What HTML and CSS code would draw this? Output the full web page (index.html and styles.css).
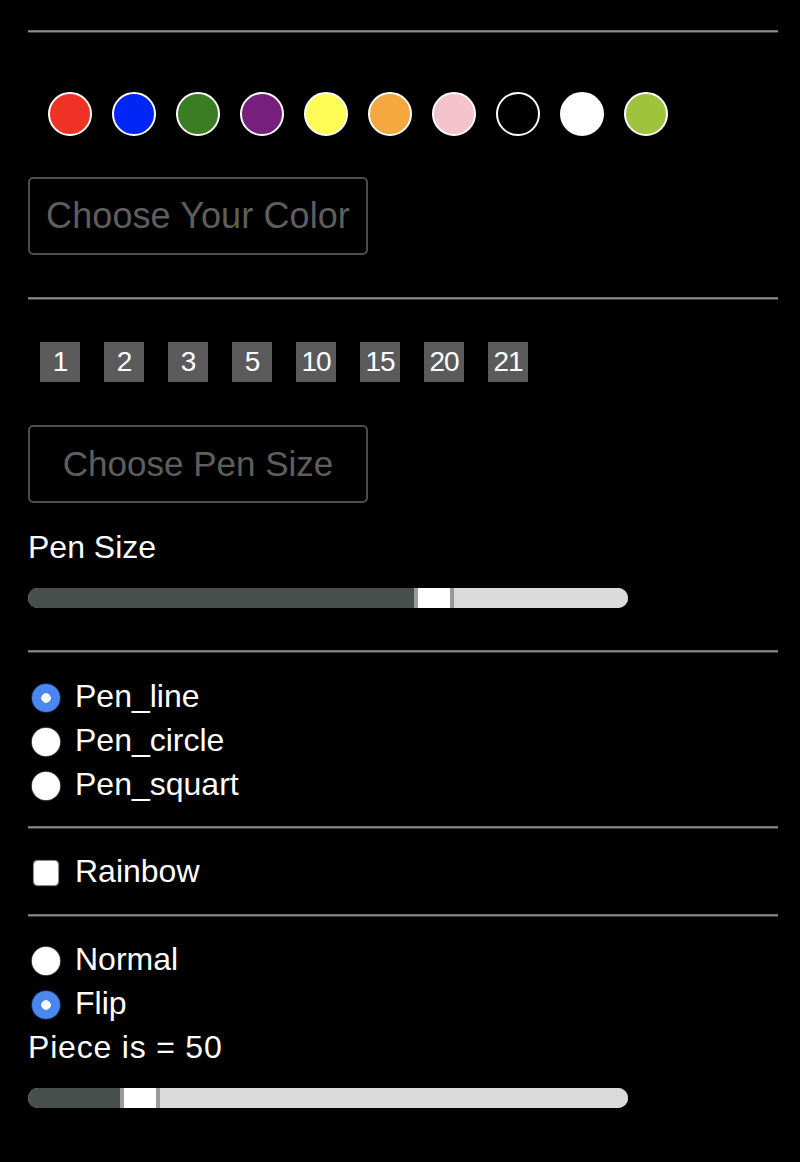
FILE: index.html
```html
<!DOCTYPE html>
<html lang="en">
<head>
<meta charset="utf-8">
<title>Pen Settings</title>
<link rel="stylesheet" href="styles.css">
</head>
<body>
<div class="panel">
  <hr class="rule">
  <div class="palette">
    <span class="swatch red"></span>
    <span class="swatch blue"></span>
    <span class="swatch green"></span>
    <span class="swatch purple"></span>
    <span class="swatch yellow"></span>
    <span class="swatch orange"></span>
    <span class="swatch pink"></span>
    <span class="swatch black"></span>
    <span class="swatch white"></span>
    <span class="swatch lime"></span>
  </div>
  <button class="choose choose-color">Choose Your Color</button>
  <hr class="rule rule-2">
  <div class="sizes">
    <span class="size">1</span>
    <span class="size">2</span>
    <span class="size">3</span>
    <span class="size">5</span>
    <span class="size">10</span>
    <span class="size">15</span>
    <span class="size">20</span>
    <span class="size">21</span>
  </div>
  <button class="choose choose-size">Choose Pen Size</button>
  <div class="label pen-label">Pen Size</div>
  <div class="slider slider-pen">
    <div class="fill" style="width:386px"></div>
    <div class="thumb"></div>
    <div class="rest"></div>
  </div>
  <hr class="rule rule-3">
  <div class="options options-pen">
    <label class="opt"><input type="radio" name="pen" checked><span>Pen_line</span></label>
    <label class="opt"><input type="radio" name="pen"><span>Pen_circle</span></label>
    <label class="opt"><input type="radio" name="pen"><span>Pen_squart</span></label>
  </div>
  <hr class="rule rule-4">
  <div class="options options-rainbow">
    <label class="opt"><input type="checkbox" class="check"><span>Rainbow</span></label>
  </div>
  <hr class="rule rule-5">
  <div class="options options-mode">
    <label class="opt"><input type="radio" name="mode"><span>Normal</span></label>
    <label class="opt"><input type="radio" name="mode" checked><span>Flip</span></label>
  </div>
  <div class="label piece-label">Piece is = 50</div>
  <div class="slider slider-piece">
    <div class="fill" style="width:92px"></div>
    <div class="thumb"></div>
    <div class="rest"></div>
  </div>
</div>
</body>
</html>
```
FILE: styles.css
```css
html, body {
  margin: 0;
  padding: 0;
  background: #000;
}

body {
  font-family: "Liberation Sans", Arial, sans-serif;
  color: #fff;
}

.panel {
  width: 750px;
  margin-left: 28px;
  padding-top: 30px;
  padding-bottom: 40px;
}

.rule {
  display: block;
  margin: 0;
  border: 0;
  height: 3px;
  background: linear-gradient(to bottom, #6e6e6e 0, #6e6e6e 33%, #8c8c8c 33%, #8c8c8c 66%, #3c3c3c 66%, #3c3c3c 100%);
}

.palette {
  display: flex;
  gap: 20px;
  padding-left: 20px;
  margin-top: 59px;
  height: 44px;
}

.swatch {
  width: 44px;
  height: 44px;
  box-sizing: border-box;
  border-radius: 50%;
  border: 2px solid #fff;
}

.red { background: #ee3326; }
.blue { background: #0026f5; }
.green { background: #3a7d24; }
.purple { background: #761f7c; }
.yellow { background: #fffc55; }
.orange { background: #f4a83f; }
.pink { background: #f5c3cb; }
.black { background: #000; }
.white { background: #fff; }
.lime { background: #a0c33e; }

.choose {
  display: block;
  width: 340px;
  height: 78px;
  box-sizing: border-box;
  margin: 41px 0 0 0;
  padding: 0;
  background: transparent;
  border: 2px solid #4c4c4c;
  border-radius: 5px;
  color: #5e5e5e;
  font-family: "Liberation Sans", Arial, sans-serif;
  font-size: 35px;
  text-align: center;
  cursor: pointer;
}

.choose-color {
  font-size: 36px;
  letter-spacing: 0.1px;
}

.rule-2 { margin-top: 42px; }

.sizes {
  display: flex;
  gap: 24px;
  padding-left: 12px;
  margin-top: 42px;
}

.size {
  width: 40px;
  height: 40px;
  background: #5b5b5b;
  color: #fff;
  font-size: 28px;
  line-height: 40px;
  text-align: center;
  letter-spacing: -1px;
}

.choose-size { margin-top: 43px; }

.label {
  font-size: 32px;
  line-height: 40px;
  color: #fff;
}

.pen-label { margin-top: 24px; }

.piece-label { letter-spacing: 0.8px; }

.slider {
  display: flex;
  width: 600px;
  height: 20px;
  border-radius: 10px;
  overflow: hidden;
  background: #dadada;
}

.slider-pen { margin-top: 21px; }
.slider-piece { margin-top: 21px; }

.fill {
  background: #474e4b;
  height: 100%;
}

.thumb {
  width: 40px;
  height: 100%;
  box-sizing: border-box;
  background: #fff;
  border-left: 4px solid #9a9a9a;
  border-right: 4px solid #9a9a9a;
}

.rest {
  flex: 1;
  height: 100%;
  background: #dadada;
}

.rule-3 { margin-top: 42px; }

.options {
  display: flex;
  flex-direction: column;
}

.options-pen { margin-top: 23px; }
.options-rainbow { margin-top: 22px; }
.options-mode { margin-top: 22px; }

.rule-4 { margin-top: 18px; }
.rule-5 { margin-top: 19px; }

.opt {
  display: flex;
  align-items: center;
  height: 44px;
  gap: 15px;
  padding-left: 4px;
  font-size: 32px;
  color: #fff;
}

.opt span {
  position: relative;
  top: -2px;
}

.opt input[type="radio"] {
  appearance: none;
  -webkit-appearance: none;
  margin: 0;
  width: 28px;
  height: 28px;
  border-radius: 50%;
  background: #fff;
  box-shadow: 0 0 1px 0.5px rgba(255, 255, 255, 0.6);
  flex: none;
}

.opt input[type="radio"]:checked {
  background: radial-gradient(circle, #fff 0, #fff 4.5px, #4a88f0 5px);
  box-shadow: 0 0 1px 0.5px rgba(74, 136, 240, 0.6);
}

.opt input.check {
  appearance: none;
  -webkit-appearance: none;
  margin: 0 2px 0 2px;
  width: 24px;
  height: 24px;
  border-radius: 4px;
  background: #fff;
  box-shadow: 0 0 1px 0.5px rgba(255, 255, 255, 0.6);
  flex: none;
}
```
